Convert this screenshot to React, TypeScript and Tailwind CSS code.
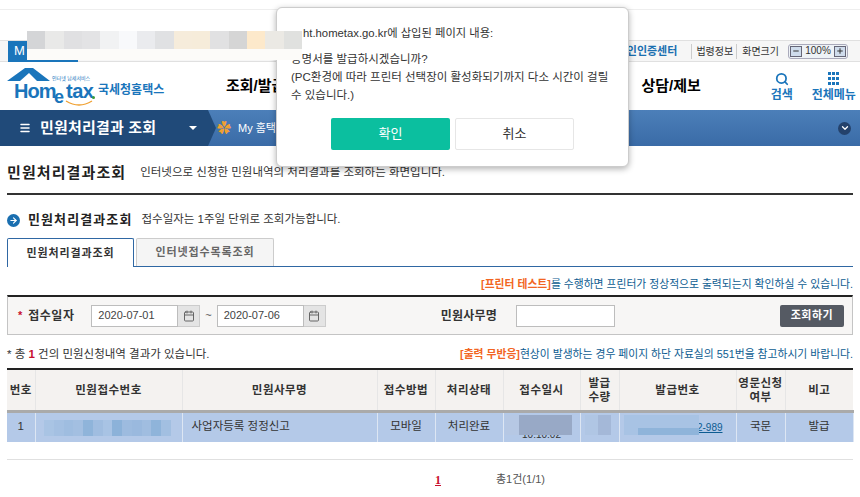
import React from "react";
import { Search, Menu, ChevronDown, Minus, Plus, ArrowRight, Calendar } from "lucide-react";

const KR = "font-['Liberation_Sans','Noto_Sans_CJK_KR',sans-serif]";

const headers: { label: React.ReactNode; width: string }[] = [
  { label: "번호", width: "w-[28px]" },
  { label: "민원접수번호", width: "w-[147px]" },
  { label: "민원사무명", width: "w-[195px]" },
  { label: "접수방법", width: "w-[58px]" },
  { label: "처리상태", width: "w-[68px]" },
  { label: "접수일시", width: "w-[77px]" },
  { label: <>발급<br />수량</>, width: "w-[39px]" },
  { label: "발급번호", width: "w-[117px]" },
  { label: <>영문신청<br />여부</>, width: "w-[49px]" },
  { label: "비고", width: "w-[68px]" },
];

const topBlur = ["#d4d5d7", "#e9e9e8", "#e0e0e2", "#e3e3e5", "#f1f2f3", "#f8f9fb", "#eaebee", "#e0e1e3", "#f6ecdb", "#f6ecda", "#e1e1e2", "#d5d5d5", "#fde9cb", "#ebe9e4", "#e0e1df"];
const receiptBlur = ["#a9c4e4", "#a4c0e2", "#9fbde0", "#a3bfe1", "#8fb4da", "#a0bde0", "#a8c3e4", "#8cb2d9", "#9dbbdf", "#9ab9de", "#a0bde0", "#8fb4da", "#a2bfe1"];

function DateField({ value }: { value: string }) {
  return (
    <div className="flex h-[22px]">
      <div className="flex w-[87px] items-center border border-[#bdbdbd] bg-white pl-[6px] text-[11px] text-[#444]">{value}</div>
      <div className="flex w-[22px] items-center justify-center border border-l-0 border-[#ccc] bg-[#e4e4e4]">
        <Calendar size={12} className="text-[#666]" />
      </div>
    </div>
  );
}

export default function App() {
  return (
    <div className={`relative h-[497px] w-[860px] overflow-hidden bg-white ${KR}`}>
      {/* top utility bars */}
      <div className="h-[10px] border-b border-[#eeeeee]" />
      <div className="h-[30px]" />
      <div className="flex h-[22px] items-center border-y border-[#e0e0e0] bg-[#f6f6f6]">
        <div className="ml-[8px] flex h-[21px] w-[70px] items-center bg-[#1a75bb] pl-[6px] text-[13px] text-white">M</div>
        <div className="ml-auto flex items-center text-[10px] text-[#333]">
          <span className="text-[11px] font-bold text-[#1a6fb0]">공인인증센터</span>
          <span className="ml-[14px] border-l border-[#ccc] pl-[4px]">법령정보</span>
          <span className="ml-[3px] border-l border-[#ccc] pl-[5px]">화면크기</span>
          <div className="ml-[9px] mr-[12px] flex h-[15px] w-[60px] items-center justify-between rounded-[3px] border border-[#aab] bg-[#eef2f6] px-[1px]">
            <span className="flex h-[11px] w-[12px] items-center justify-center border border-[#667] bg-[#cfdcec]"><Minus size={8} strokeWidth={3} /></span>
            <span className="text-[10px] leading-none">100%</span>
            <span className="flex h-[11px] w-[12px] items-center justify-center border border-[#667] bg-[#cfdcec]"><Plus size={8} strokeWidth={3} /></span>
          </div>
        </div>
      </div>

      {/* logo + main nav */}
      <div className="flex h-[48px] items-center">
        <div className="relative ml-[7px] h-[48px] w-[160px] shrink-0">
          <svg width="44" height="14" viewBox="0 0 44 14" className="absolute left-0 top-[6px]">
            <path d="M0 13 L18 0 L26 0 L43 13 L30 13 L22 5 L13 13 Z" fill="#1a75bb" />
          </svg>
          <span className="absolute left-[45px] top-[14px] text-[5px] leading-none whitespace-nowrap text-[#1a75bb]">인터넷 납세서비스</span>
          <span className="absolute left-[7px] top-[19px] text-[20px] font-bold leading-none tracking-[-1px] text-[#1a75bb]">Hom</span>
          <span className="absolute left-[47px] top-[26px] text-[18px] font-bold leading-none text-[#1a75bb]">e</span>
          <span className="absolute left-[59px] top-[19px] text-[20px] font-bold leading-none tracking-[-0.5px] text-[#1a75bb]">tax</span>
          <span className="absolute left-[85px] top-[34px] h-[3px] w-[3px] rounded-full bg-[#3a9a3a]" />
          <span className="absolute left-[91px] top-[22px] text-[12px] font-bold leading-none whitespace-nowrap text-[#1a75bb]">국세청홈택스</span>
          <svg width="28" height="7" viewBox="0 0 28 7" className="absolute left-[58px] top-[38px]">
            <path d="M1 1 Q14 9 27 1" stroke="#f0a030" strokeWidth="1.3" fill="none" />
          </svg>
        </div>
        <span className="ml-[59px] shrink-0 text-[15px] font-bold text-black">조회/발급</span>
        <span className="ml-[356px] shrink-0 text-[15px] font-bold text-black">상담/제보</span>
        <div className="ml-[66px] flex w-[30px] shrink-0 flex-col items-center text-[#1a75bb]">
          <Search size={14} strokeWidth={3} />
          <span className="mt-[3px] text-[12px] font-bold leading-none">검색</span>
        </div>
        <div className="ml-[13px] flex w-[48px] shrink-0 flex-col items-center text-[#1a75bb]">
          <div className="grid h-[14px] w-[12px] grid-cols-3 gap-[1px]">
            {[...Array(9)].map((_, idx) => <span key={idx} className="h-[3px] w-[3px] bg-[#1a75bb]" />)}
          </div>
          <span className="mt-[3px] whitespace-nowrap text-[12px] font-bold leading-none">전체메뉴</span>
        </div>
      </div>

      {/* blue band */}
      <div className="flex h-[36px] bg-gradient-to-b from-[#4c7fb9] to-[#3a6ba7]">
        <div className="flex w-[208px] items-center bg-[#204a79] pl-[19px] text-white">
          <Menu size={12} strokeWidth={3} />
          <span className="ml-[9px] text-[15px] font-bold tracking-[0.2px]">민원처리결과 조회</span>
          <span className="ml-auto mr-[11px] h-0 w-0 border-x-[4px] border-t-[4px] border-x-transparent border-t-white" />
        </div>
        <div className="h-0 w-0 border-y-[18px] border-l-[8px] border-y-transparent border-l-[#204a79]" />
        <div className="ml-[1px] flex flex-1 items-center text-white">
          <span className="text-[14px] text-[#f0a030]">✿</span>
          <span className="ml-[7px] text-[11px]">My 홈택스</span>
          <span className="ml-auto mr-[9px] flex h-[13px] w-[13px] items-center justify-center rounded-full bg-[#24426c]">
            <ChevronDown size={10} strokeWidth={3} />
          </span>
        </div>
      </div>

      {/* page content */}
      <div className="px-[7px]">
        <div className="flex h-[49px] items-center border-b-2 border-[#333] pt-[7px]">
          <h1 className="text-[15px] font-bold tracking-[1.1px] text-[#222]">민원처리결과조회</h1>
          <p className="ml-[14px] text-[11.5px] text-[#333]">인터넷으로 신청한 민원내역의 처리결과를 조회하는 화면입니다.</p>
        </div>

        <div className="mt-[16px] flex h-[18px] items-center">
          <span className="flex h-[13px] w-[13px] items-center justify-center rounded-full bg-[#1a6fb0] text-white"><ArrowRight size={9} strokeWidth={3} /></span>
          <h2 className="ml-[8px] text-[13px] font-bold tracking-[1.1px] text-[#222]">민원처리결과조회</h2>
          <p className="ml-[9px] text-[11.5px] text-[#333]">접수일자는 1주일 단위로 조회가능합니다.</p>
        </div>

        <div className="mt-[9px] flex h-[29px] items-end border-b border-[#2f67a3]">
          <div className="relative top-[1px] flex h-[29px] w-[127px] items-center justify-center rounded-t-[2px] border border-b-0 border-[#2f67a3] bg-white text-[11px] font-bold tracking-[0.9px] text-[#333]">민원처리결과조회</div>
          <div className="ml-[2px] flex h-[28px] w-[138px] items-center justify-center rounded-t-[2px] border border-b-0 border-[#ccc] bg-[#f5f5f5] text-[11px] font-bold tracking-[0.9px] text-[#666]">인터넷접수목록조회</div>
        </div>

        <p className="mt-[9px] h-[17px] text-right text-[10.8px] leading-[17px] text-[#0d5c91]">
          <b className="text-[#f26522]">[프린터 테스트]</b>를 수행하면 프린터가 정상적으로 출력되는지 확인하실 수 있습니다.
        </p>

        <div className="mt-[2px] flex h-[40px] items-center border border-t-2 border-[#c4c4c4] border-t-[#222] bg-[#f7f6f5]">
          <span className="ml-[10px] text-[11px] font-bold text-[#c8102e]">*</span>
          <span className="ml-[6px] w-[63px] text-[12px] font-bold tracking-[0.5px] text-[#333]">접수일자</span>
          <DateField value="2020-07-01" />
          <span className="mx-[5px] text-[11px] text-[#555]">~</span>
          <DateField value="2020-07-06" />
          <span className="ml-[115px] text-[12px] font-bold tracking-[0.2px] text-[#333]">민원사무명</span>
          <div className="ml-[19px] h-[22px] w-[99px] border border-[#bdbdbd] bg-white" />
          <button className="ml-auto mr-[8px] h-[22px] w-[64px] rounded-[2px] bg-[#555a63] text-[11px] font-bold tracking-[0.5px] text-white">조회하기</button>
        </div>

        <div className="mt-[11px] flex h-[17px] items-center justify-between leading-[17px]">
          <p className="text-[11.5px] text-[#333]">* 총 <b className="text-[#c8102e]">1</b> 건의 민원신청내역 결과가 있습니다.</p>
          <p className="text-[10.8px] text-[#0d5c91]"><b className="text-[#f26522]">[출력 무반응]</b>현상이 발생하는 경우 페이지 하단 자료실의 551번을 참고하시기 바랍니다.</p>
        </div>

        <table className="mt-[5px] w-[846px] table-fixed border-collapse text-[#333]">
          <thead>
            <tr className="h-[42px] border-t-2 border-[#222] bg-[#f4f2f0]">
              {headers.map((h, idx) => (
                <th key={idx} className={`${h.width} border-x border-b-[3px] border-x-[#e6e6e6] border-b-[#aaa] p-0 text-[11.5px] font-bold leading-[14px] tracking-[0.5px] first:border-l-0 last:border-r-0`}>
                  {h.label}
                </th>
              ))}
            </tr>
          </thead>
          <tbody>
            <tr className="h-[30px] bg-[#b4c9e8] text-center text-[11.5px]">
              <td className="border-x border-[#dde6f3] first:border-l-0">1</td>
              <td className="border-x border-[#dde6f3]" />
              <td className="border-x border-[#dde6f3] pl-[9px] text-left">사업자등록 정정신고</td>
              <td className="border-x border-[#dde6f3]">모바일</td>
              <td className="border-x border-[#dde6f3]">처리완료</td>
              <td className="border-x border-[#dde6f3] pt-[14px] text-[10px]">10:10:02</td>
              <td className="border-x border-[#dde6f3]" />
              <td className="border-x border-[#dde6f3] pr-[13px] text-right text-[10px] text-[#0d5c91] underline">2-989</td>
              <td className="border-x border-[#dde6f3]">국문</td>
              <td className="border-x border-[#dde6f3]">발급</td>
            </tr>
          </tbody>
        </table>

        <div className="mt-[17px] border-t border-[#e0e0e0]" />
        <div className="mt-[11px] flex items-center text-[11px]">
          <span className="ml-[428px] w-[61px] font-['Liberation_Serif',serif] text-[12px] font-bold text-[#c8102e] underline">1</span>
          <span className="text-[#555]">총1건(1/1)</span>
        </div>
      </div>

      {/* browser confirm dialog */}
      <div className="absolute left-[276px] top-[7px] h-[160px] w-[353px] rounded-[6px] border border-[#ccc] bg-white pl-[14px] pr-[18px] pt-[17px] text-[11.5px] text-[#333] shadow-[0_2px_6px_rgba(0,0,0,0.3)]">
        <p className="h-[17px] pl-[12px] text-[11.3px] leading-[17px]">ht.hometax.go.kr에 삽입된 페이지 내용:</p>
        <p className="mt-[8px] leading-[18px]">증명서를 발급하시겠습니까?</p>
        <p className="leading-[18px]">(PC환경에 따라 프린터 선택장이 활성화되기까지 다소 시간이 걸릴 수 있습니다.)</p>
        <div className="mt-[14px] flex justify-center gap-[5px] pl-[4px]">
          <button className="h-[32px] w-[119px] rounded-[2px] bg-[#0bbf9f] text-[13px] text-white">확인</button>
          <button className="h-[32px] w-[119px] rounded-[2px] border border-[#e6e6e6] bg-white text-[13px] text-[#333]">취소</button>
        </div>
      </div>

      {/* pixelated privacy blurs */}
      <div className="absolute left-[27px] top-[31px] w-[275px]">
        <div className="flex h-[18px]">
          {topBlur.map((c, idx) => <span key={idx} className="h-full flex-1" style={{ backgroundColor: c }} />)}
        </div>
        <div className="h-[11px] bg-[#fcfbf9]" />
      </div>
      <div className="absolute left-[44px] top-[420px] flex h-[16px] w-[127px]">
        {receiptBlur.map((c, idx) => <span key={idx} className="h-full flex-1" style={{ backgroundColor: c }} />)}
      </div>
      <div className="absolute left-[505px] top-[415px] flex h-[20px] w-[67px]">
        <span className="h-full w-[14px] bg-[#b6c8e4]" />
        <span className="h-full flex-1 bg-[#98a9c6]" />
      </div>
      <div className="absolute left-[585px] top-[415px] flex h-[20px] w-[26px]">
        <span className="h-full w-[13px] bg-[#b0c6e4]" />
        <span className="h-full flex-1 bg-[#a4b8d8]" />
      </div>
      <div className="absolute left-[624px] top-[415px] h-[20px] w-[75px] bg-[#a8c3e4]">
        <div className="ml-[14px] mt-[13px] h-[7px] bg-[#8fb4da]" />
      </div>
    </div>
  );
}
